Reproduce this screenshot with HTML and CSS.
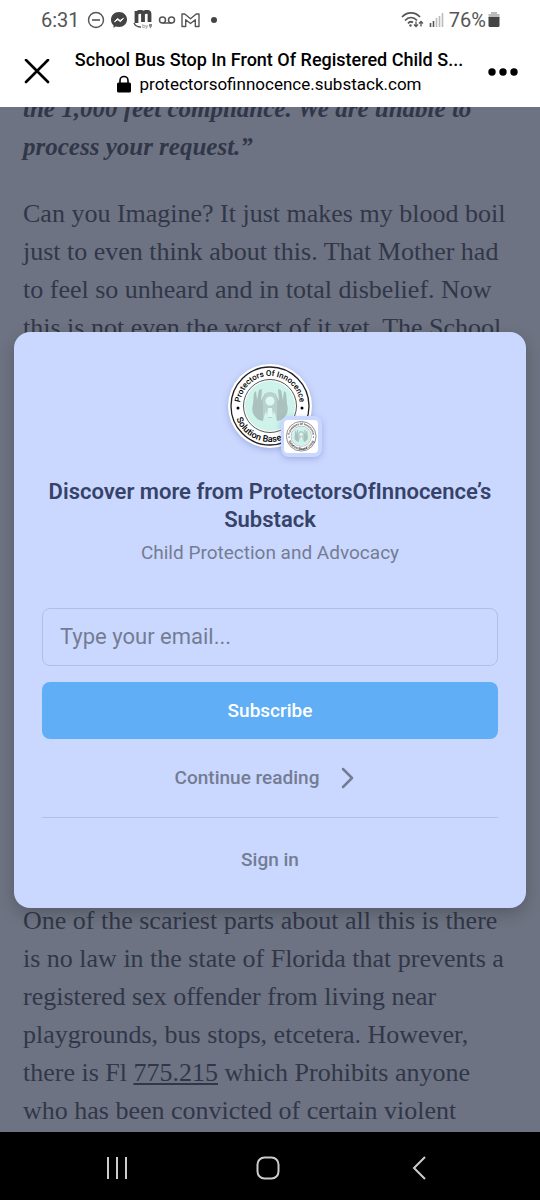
FILE: index.html
```html
<!DOCTYPE html>
<html lang="en">
<head>
    <meta charset="UTF-8">
    <meta name="viewport" content="width=device-width, initial-scale=1.0">
    <title>School Bus Stop In Front Of Registered Child S...</title>
    <link rel="stylesheet" href="styles.css">
</head>
<body>
    <div class="status-bar">
        <div class="status-left">
            <span class="clock">6:31</span>
            <svg width="18" height="18" viewBox="0 0 18 18"><circle cx="9" cy="9" r="7.5" fill="none" stroke="#555" stroke-width="1.4"/><path d="M5 9h8" stroke="#555" stroke-width="1.6"/></svg>
            <svg width="18" height="18" viewBox="0 0 18 18"><path d="M9 1C4.400 1 1 4.300 1 8.700c0 2.300 1 4.300 2.500 5.600v2.500l2.300-1.200c1 .3 2 .5 3.200.5 4.600 0 8-3.200 8-7.500S13.600 1 9 1z" fill="#444"/><path d="M4.500 10.800l3-3.300 2.600 2 3.400-2.200-3.100 3.400-2.600-2z" fill="#fff" stroke="#fff"/></svg>
            <svg width="20" height="20" viewBox="0 0 20 20"><path d="M3.500 13V1M3.500 4c1-3 6.500-3 6.500 0v8M10 4c1-3 6.500-3 6.500 0v8" fill="none" stroke="#444" stroke-width="3.800"/><path d="M1 13c1 2.500 3 4 7 4" fill="none" stroke="#555" stroke-width="1.400"/><text x="9" y="18" class="tiny">by</text><path d="M16 14h3v2l-1.500 2.500L16 16z" fill="#888"/></svg>
            <svg width="18" height="18" viewBox="0 0 18 18"><g fill="none" stroke="#555" stroke-width="1.500"><circle cx="4.500" cy="9" r="3"/><circle cx="13.500" cy="9" r="3"/><path d="M4.500 12h9"/></g></svg>
            <svg width="19" height="18" viewBox="0 0 19 18"><path d="M1 15.500V3h2.800l5.700 4.700L15.200 3H18v12.500h-3.700V8.800L9.500 12.500 4.700 8.800v6.700z" fill="none" stroke="#555" stroke-width="1.400" stroke-linejoin="round"/></svg>
            <span class="dot"></span>
        </div>
        <div class="status-right">
            <svg width="23" height="18" viewBox="0 0 23 18"><g fill="none" stroke="#555" stroke-width="1.700"><path d="M1 6c5-5.500 13-5.500 18 0M4 9.500c3.500-4 8.500-4 12 0M7 12.500c1.500-2 3.500-2 5-1"/><path d="M15 10.500v5m-2-2l2 2 2-2M20 15.500v-5m-2 2l2-2 2 2" stroke-width="1.300"/></g><circle cx="9.500" cy="14.500" r="1.200" fill="#555"/></svg>
            <svg width="15" height="18" viewBox="0 0 15 18"><path d="M1.500 12v4M4.500 10v6" stroke="#555" stroke-width="1.600"/><path d="M7.500 7v9M10.500 5v11M13.500 2v14" stroke="#bbb" stroke-width="1.600"/></svg>
            <div class="battery">
                <span>76%</span>
                <svg width="12" height="18" viewBox="0 0 12 18"><path d="M3 1h6v2h2.500v4H.5V3H3z" fill="#bbb"/><path d="M.5 6h11v8.500A1.500 1.500 0 0 1 10 16H2a1.500 1.500 0 0 1-1.500-1.500z" fill="#444"/></svg>
            </div>
        </div>
    </div>

    <header class="browser-bar">
        <button type="button" class="icon-button" aria-label="Close">
            <svg width="26" height="26" viewBox="0 0 26 26"><path d="M2 1l22 22M24 1L2 23" stroke="#000" stroke-width="2.600" stroke-linecap="round"/></svg>
        </button>
        <div class="page-info">
            <div class="page-title">School Bus Stop In Front Of Registered Child S...</div>
            <div class="page-url">
                <svg width="16" height="18" viewBox="0 0 16 18"><path d="M4 8V5.500a4 4 0 0 1 8 0V8" fill="none" stroke="#000" stroke-width="1.600"/><rect x="1" y="7.500" width="14" height="10" rx="1.500"/></svg>
                <span>protectorsofinnocence.substack.com</span>
            </div>
        </div>
        <button type="button" class="icon-button" aria-label="More options">
            <svg width="30" height="8" viewBox="0 0 30 8"><circle cx="4" cy="4" r="3.700"/><circle cx="15" cy="4" r="3.700"/><circle cx="26" cy="4" r="3.700"/></svg>
        </button>
    </header>

    <main class="reader">
        <article class="article">
            <div class="article-top">
                <p class="quote">the 1,000 feet compliance. We are unable to<br>process your request.”</p>
                <p>Can you Imagine? It just makes my blood boil<br>just to even think about this. That Mother had<br>to feel so unheard and in total disbelief. Now<br>this is not even the worst of it yet. The School</p>
            </div>
            <p>One of the scariest parts about all this is there<br>is no law in the state of Florida that prevents a<br>registered sex offender from living near<br>playgrounds, bus stops, etcetera. However,<br>there is Fl <a href="#">775.215</a> which Prohibits anyone<br>who has been convicted of certain violent</p>
        </article>

        <div class="overlay">
            <section class="modal">
                <svg class="logo" width="96" height="96" viewBox="0 0 96 96">
                    <defs>
                        <path id="arcTop" d="M18 48a30 30 0 0 1 60 0"/>
                        <path id="arcBottom" d="M12 48a36 36 0 0 0 72 0"/>
                        <g id="seal">
                            <circle cx="48" cy="48" r="39" fill="#fff" stroke="#222" stroke-width="1.300"/>
                            <circle cx="48" cy="48" r="26.500" fill="#fff" stroke="#555" stroke-width="1"/>
                            <circle cx="48" cy="48" r="25" fill="#cdf3eb"/>
                            <path d="M37 62c-6-4-8-9-6-16l1-11 2-2 1 9 2-10 3-1-1 12 4-8 1 2-3 12c2 2 3 5 1 8l-1 6zM59 62c6-4 8-9 6-16l-1-11-2-2-1 9-2-10-3-1 1 12-4-8-1 2 3 12c-2 2-3 5-1 8l1 6z" fill="#abc1be"/>
                            <path d="M41 61V49c-1-9 1-15 7-15s8 6 7 15v12l-3-8-2 7h-4l-2-7z" fill="#b9d1cd"/>
                            <circle cx="48" cy="43" r="4.500" fill="#ddf8f2"/>
                            <path d="M46 50h4l1 9h-6z" fill="#ddf8f2"/>
                            <circle cx="16" cy="50" r="1.500"/>
                            <circle cx="80" cy="50" r="1.500"/>
                            <text class="seal-text seal-top" text-anchor="middle"><textPath href="#arcTop" startOffset="50%">Protectors Of Innocence</textPath></text>
                            <text class="seal-text" text-anchor="middle"><textPath href="#arcBottom" startOffset="50%">Solution Based Living</textPath></text>
                        </g>
                    </defs>
                    <circle class="logo-disc" cx="48" cy="48" r="42"/>
                    <use href="#seal"/>
                    <rect class="badge-frame" x="59" y="58" width="41" height="41" rx="8"/>
                    <rect class="badge" x="62" y="62" width="34" height="33" rx="4"/>
                    <use href="#seal" transform="translate(61 60) scale(.38)"/>
                </svg>
                <h1 class="title">Discover more from ProtectorsOfInnocence’s<br>Substack</h1>
                <p class="subtitle">Child Protection and Advocacy</p>
                <form class="subscribe-form">
                    <input type="email" class="email" placeholder="Type your email..." aria-label="Email">
                    <button type="submit" class="subscribe">Subscribe</button>
                </form>
                <a href="#" class="continue">
                    <span>Continue reading</span>
                    <svg width="14" height="22" viewBox="0 0 14 22"><path d="M2 2l9 9-9 9" fill="none" stroke="#747c93" stroke-width="2.500" stroke-linecap="round" stroke-linejoin="round"/></svg>
                </a>
                <a href="#" class="sign-in">Sign in</a>
            </section>
        </div>
    </main>

    <nav class="nav-bar">
        <button type="button" aria-label="Recent apps"><svg width="24" height="24" viewBox="0 0 24 24"><path d="M3 1v22M12 1v22M21 1v22"/></svg></button>
        <button type="button" aria-label="Home"><svg width="24" height="24" viewBox="0 0 24 24"><rect x="1.500" y="1.500" width="21" height="21" rx="7"/></svg></button>
        <button type="button" aria-label="Back"><svg width="24" height="24" viewBox="0 0 24 24"><path d="M18 1L7 12l11 11"/></svg></button>
    </nav>
</body>
</html>
```
FILE: styles.css
```css
* {
    box-sizing: border-box;
}

body {
    display: flex;
    flex-direction: column;
    min-height: 100vh;
    margin: 0;
    background-color: white;
    font-family: Roboto, sans-serif;
}

button {
    padding: 0;
    border: none;
    background: none;
    font-family: inherit;
    cursor: pointer;
}

svg {
    display: block;
    flex: none;
}

.status-bar {
    display: flex;
    justify-content: space-between;
    height: 40px;
    padding: 0 40px 0 41px;
    color: #555;
    font-size: 20px;
}

.status-left, .status-right, .battery {
    display: flex;
    align-items: center;
    gap: 5px;
}

.battery {
    gap: 2px;
}

.clock {
    margin-right: 2px;
}

.tiny {
    font-size: 6px;
    fill: #888;
}

.dot {
    width: 6px;
    height: 6px;
    margin-left: 6px;
    border-radius: 50%;
    background-color: #444;
}

.browser-bar {
    display: flex;
    align-items: center;
    justify-content: space-between;
    height: 67px;
    padding: 0 22px 4px 24px;
}

.page-info {
    min-width: 0;
    text-align: center;
    line-height: 24px;
}

.page-title {
    overflow: hidden;
    white-space: nowrap;
    font-size: 18px;
    font-weight: 500;
}

.page-url {
    display: flex;
    align-items: center;
    justify-content: center;
    gap: 7px;
    font-size: 17px;
}

.reader {
    position: relative;
    display: flex;
    flex: 1;
    background-color: #6d7382;
}

.article {
    display: flex;
    flex: 1;
    flex-direction: column;
    justify-content: space-between;
    padding: 0 23px 2px;
    overflow: hidden;
    color: #313748;
    font-family: "Liberation Serif", serif;
    font-size: 26px;
    line-height: 38px;
    white-space: nowrap;
}

.article-top {
    margin-top: -17px;
}

.article p {
    margin: 0;
}

.article .quote {
    margin-bottom: 29px;
    font-size: 25px;
    font-style: italic;
    font-weight: bold;
}

.article a {
    color: inherit;
}

.overlay {
    position: absolute;
    inset: 0;
    display: flex;
    align-items: center;
    padding: 0 14px;
}

.modal {
    display: flex;
    flex: 1;
    flex-direction: column;
    align-items: center;
    padding: 26px 28px 34px;
    border-radius: 16px;
    background-color: #cad8ff;
    box-shadow: 0 6px 16px rgba(0, 0, 0, 0.2);
    color: #747c93;
    font-size: 19px;
}

.logo {
    overflow: visible;
}

.logo-disc {
    fill: white;
    filter: drop-shadow(0 2px 3px rgba(60, 80, 160, 0.3));
}

.seal-text {
    font-family: Roboto, sans-serif;
    font-size: 9px;
    font-weight: 500;
}

.seal-top {
    font-size: 8px;
}

.badge-frame {
    fill: #cad8ff;
    filter: drop-shadow(0 2px 3px rgba(60, 80, 160, 0.3));
}

.badge {
    fill: white;
}

.title {
    margin: 24px 0 0;
    color: #364267;
    font-size: 22px;
    font-weight: 600;
    line-height: 28px;
    text-align: center;
}

.subtitle {
    margin: 5px 0 41px;
    line-height: 28px;
}

.subscribe-form {
    display: flex;
    flex-direction: column;
    gap: 16px;
    width: 100%;
}

.email {
    width: 100%;
    height: 58px;
    padding: 0 17px;
    border: 1px solid #b2bfe2;
    border-radius: 8px;
    background: none;
    font-family: inherit;
    font-size: 22px;
}

.email::placeholder {
    color: #747c93;
}

.subscribe {
    height: 57px;
    border-radius: 8px;
    background-color: #60aef6;
    color: white;
    font-size: 19px;
    font-weight: 500;
}

.continue, .sign-in {
    display: flex;
    align-items: center;
    justify-content: center;
    width: 100%;
    color: inherit;
    font-weight: 500;
    text-decoration: none;
}

.continue {
    gap: 22px;
    height: 79px;
    padding-right: 10px;
    border-bottom: 1px solid #b2bfe2;
}

.sign-in {
    padding-top: 28px;
    line-height: 28px;
}

.nav-bar {
    display: flex;
    align-items: center;
    height: 68px;
    padding: 4px 46px 0 41px;
    background-color: black;
}

.nav-bar button {
    display: flex;
    flex: 1;
    justify-content: center;
}

.nav-bar svg {
    fill: none;
    stroke: #ccc;
    stroke-width: 2;
}
```
